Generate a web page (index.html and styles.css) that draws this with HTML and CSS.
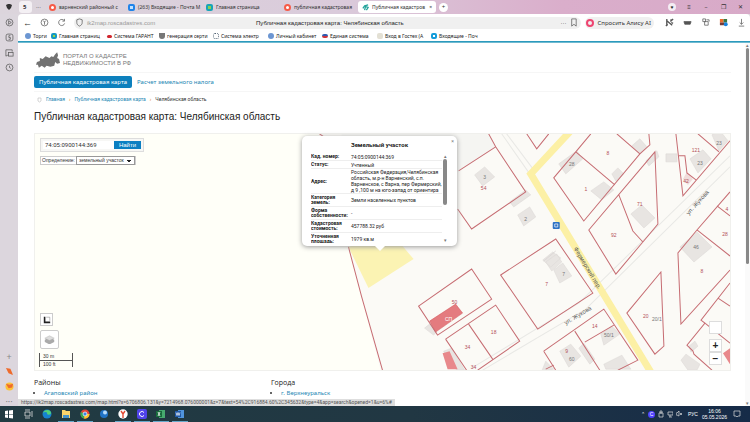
FILE: index.html
```html
<!DOCTYPE html>
<html lang="ru">
<head>
<meta charset="utf-8">
<title>Публичная кадастровая карта: Челябинская область</title>
<link rel="stylesheet" href="styles.css">
</head>
<body>
<header class="tabs">
  <svg class="cat" viewBox="0 0 8 8"><path d="M1 2l2-1h2l2 1-1 3-2 2-2-2z" fill="#333"/></svg>
  <button class="tab group">5</button><span class="dash">···</span>
  <button class="tab t1"><i class="dot red"></i><span>варненский районный с</span></button>
  <button class="tab t2"><i class="dot mail"></i><span>(263) Входящие - Почта М</span></button>
  <button class="tab t3"><i class="dot teal"></i><span>Главная страница</span></button>
  <button class="tab t4"><i class="dot red"></i><span>публичная кадастровая</span></button>
  <button class="tab t5 active"><svg class="favicon" viewBox="0 0 8 8"><path d="M1 5l2-3 4-1M3 7l1-4 3 1-2 3" fill="none" stroke="#23a39b" stroke-width="1.5"/></svg><span>Публичная кадастров</span><b>×</b></button>
  <button class="plus" aria-label="Новая вкладка">+</button>
  <div class="window-controls"><button class="shield" aria-label="Защита">♥</button><button aria-label="Меню">≡</button><button aria-label="Свернуть">–</button><button aria-label="Развернуть">❐</button><button aria-label="Закрыть">✕</button></div>
</header>
<div class="workspace">
  <aside class="rail">
    <button aria-label="Алиса"><svg viewBox="0 0 10 10"><circle cx="5" cy="5" r="3.8"/><path d="M4 3l3 2-3 2z"/></svg></button>
    <button aria-label="Вкладки"><svg viewBox="0 0 10 10"><rect x="1.2" y="1.2" width="7.6" height="7.6" rx="2"/><path d="M6 3H4.3v2H6v2H4"/></svg></button>
    <button aria-label="Снимки"><svg viewBox="0 0 10 10"><path d="M4 8H3L1 9V2h7v2"/><rect x="4" y="5" width="5" height="4"/></svg></button>
    <button aria-label="История"><svg viewBox="0 0 10 10"><circle cx="5" cy="5" r="3.8"/><path d="M5 3v2l1.5 1"/></svg></button>
    <span class="grow"></span>
    <button class="add" aria-label="Добавить">+</button>
    <button aria-label="Сервис"><svg viewBox="0 0 10 10"><path class="orange" d="M1 1l5 1 3 7-5-2z"/></svg></button>
    <button aria-label="Маркет"><svg viewBox="0 0 10 10"><circle cx="5" cy="5" r="4.5" fill="#fdc238" stroke="none"/><path class="orange" d="M1 2l4 1 4-1-1 4-4 1z"/></svg></button>
    <button class="add" aria-label="Ещё">···</button>
  </aside>
  <section class="browser">
    <div class="toolbar">
      <button class="back" aria-label="Назад">←</button>
      <button aria-label="Яндекс"><svg viewBox="0 0 10 10"><circle cx="5" cy="5" r="3.8"/><path d="M4 3l1 2 1-2M5 5v2.5"/></svg></button>
      <button aria-label="Обновить"><svg viewBox="0 0 10 10"><path d="M8 3a3.4 3.4 0 1 0 .5 3M8.3 1v2.5H6"/></svg></button>
      <div class="address"><svg viewBox="0 0 10 10"><path d="M5 1l3 1v3c0 2-1 3-3 4-2-1-3-2-3-4V2z"/></svg><span class="url">ik2map.roscadastres.com</span><strong>Публичная кадастровая карта: Челябинская область</strong><span class="more">···</span><svg class="bookmark" viewBox="0 0 10 10"><path d="M3 1h5v8L5.500 7 3 9z"/></svg></div>
      <button class="alice"><i></i>Спросить Алису AI</button>
      <div class="extensions">
        <svg viewBox="0 0 10 10"><path class="bold" d="M2 1v8M2 3l6 5M9 1L6 4M3 7L1 9M7 5l2 1M6 2l2 0"/></svg>
        <svg viewBox="0 0 10 10"><path d="M1 4h8l-1 3H2z" fill="#555"/></svg>
        <svg viewBox="0 0 10 10"><path d="M2 1h3v3H2zM4 4v4h4V4zM6 2h3v2"/></svg>
        <svg viewBox="0 0 10 10"><path d="M1 1h4v4H1z" class="orange"/><path d="M5 1h4v4H5z" fill="#3b7743" stroke="none"/><path d="M1 5h5v3H1z" fill="#773b36" stroke="none"/><circle cx="7.500" cy="7" r="2.200" fill="#1683df" stroke="none"/></svg>
        <svg viewBox="0 0 10 10"><path d="M5 1v6M3 5l2 2 2-2M2 9h6"/></svg>
      </div>
    </div>
    <nav class="bookmarks" aria-label="Закладки">
      <a href="#"><i class="b1"></i>Торги</a><a href="#"><i class="b2"></i>Главная страниц</a><a href="#"><i class="b3"></i>Система ГАРАНТ</a><a href="#"><i class="b4"></i>генерация серти</a><a href="#"><i class="b5"></i>Система электр</a><a href="#"><i class="b6"></i>Личный кабинет</a><a href="#"><i class="b7"></i>Единая система</a><a href="#"><i class="b8"></i>Вход в Гостех (А</a><a href="#"><i class="b9"></i>Входящие - Поч</a>
    </nav>
    <div class="viewport">
      <main>
        <div class="brand">
          <svg viewBox="0 0 25 18"><path d="M1 11l3-1 0-3 3 1 3-3 4 2 2-2 2 1 2-3 2-2 1 3-1 3 2 1 1 4-3 1-2-2-1 4-4 1-4-1-2 2-3-2-3 2-1-3-2 0z" fill="#727272"/></svg>
          <span>ПОРТАЛ О КАДАСТРЕ<br>НЕДВИЖИМОСТИ В РФ</span>
        </div>
        <nav class="menu"><a class="selected" href="#">Публичная кадастровая карта</a><a href="#">Расчет земельного налога</a></nav>
        <nav class="crumbs" aria-label="Навигация"><svg viewBox="0 0 5 6"><path d="M1 1h3v3L2.500 5 1 4z" fill="none" stroke="#bbb" stroke-width=".6"/></svg><a href="#">Главная</a><b>›</b><a href="#">Публичная кадастровая карта</a><b>›</b><span>Челябинская область</span></nav>
        <h1>Публичная кадастровая карта: Челябинская область</h1>
        <div class="map">
          <svg class="plan" viewBox="34 133 694 236" preserveAspectRatio="xMidYMid slice" role="img" aria-label="Карта участков">
            <path d="M34 133H728V369H34z" fill="#fffff8"/>
            <path d="M318 133H728V369H379L347 246z" fill="#fbfaf6"/>
            <path d="M340 133H487L494 146 457 170 347 246z" fill="#f5f5f2"/>
            <path d="M347 246L353 244 401 245 412 258 367 287z" fill="#fbf3b3"/>
            <g class="lanes"><path d="M500 133L528 173M505 133L532 169M481 369L584 308 728 166M470 367L577 302 728 155"/></g>
            <path class="road" d="M568 131L529 173 649 371"/>
            <g class="building">
              <path d="M473 174l10-8 10 10-12 9zM516 214l12-8 6 10-12 9zM508 201l16-12 5 5-17 12zM557 163l18-13 6 8-17 15zM589 190l13-9 10 8-12 10zM610 173l6-6 6 6-8 7zM630 145l8-7 7 8-7 7zM644 160l11-10 2 6-10 9zM664 153h11v8h-11zM688 158l13-9 8 9-13 14zM710 134l8-4 8 10-9 10zM629 213l11-9 13 13-11 10zM678 246l17-15 15 15-18 15zM544 261l11-8 5 8-10 9zM552 269l9-7 9 13-12 7zM558 350l11-7 10 12-12 11zM599 333l11-8 8 8-16 11zM577 347l5-5 11 16-5 5zM602 363l18-9 9 14h-25zM541 259l10-8 8 6-10 9zM542 260l12-10zM540 370l4-10 8 8zM687 345l6-5 3 5-7 6zM679 359l5-6 14 10-3 6h-9zM423 327l5-4 7 8-3 3zM442 350l8-3 13 22h-8z"/>
            </g>
            <path d="M428 320L454 303 461 312 434 331z" fill="#e47b7f" stroke="#d2545a" stroke-width=".5"/><path d="M441 352l7-2 8 18h-10zM721 352l7-5v16z" fill="#e8888b"/><path d="M681 178l4-7 6 7-5 6z" fill="#f0dcda"/>
            <g class="parcel">
              <path d="M347 246L360 295 381 369M318 133l12 8M487 133L494 146 524 191 470 228 456 208M494 146L457 170M525 133L535 148 547 133M589 133L574 151 552 177 582 220 638 153 648 144 647 133M615 133L638 153M574 151L613 184M653 151L587 229 614 273 641 241 656 223zM617 194L631 230 641 241M674 133L681 195 728 140M677 155H683L685 172 694 179M696 133L717 151M728 191L695 229 676 252 679 323 728 269M715 205L728 215M695 229L728 255"/>
              <path d="M417 305L470 268 490 298 436 334zM444 338L494 304 518 340 476 369M467 323L491 358M444 338L465 369M499 274L554 238 591 292 536 328zM542 350L602 308 636 359 616 369M573 330L598 369M583 341L612 324M542 350L554 369M544 368L552 364M659 271L625 312 653 353 662 345zM728 282L699 319 703 322 685 344 691 350 692 353 710 369M716 297L728 305M703 322L728 342"/>
            </g>
            <g class="labels">
              <text x="483" y="178">3</text><text x="482" y="189" class="redtext">54</text><text x="524" y="220">2</text><text x="570" y="165">28</text><text x="584" y="190" class="redtext">1</text><text x="606" y="154" class="redtext">8</text><text x="612" y="236" class="redtext">92</text><text x="638" y="205" class="redtext">71</text><text x="694" y="151" class="redtext">121</text><text x="698" y="164">23</text><text x="717" y="144">23</text><text x="684" y="182" class="redtext">42</text><text x="694" y="248">46</text><text x="723" y="235" class="redtext">28</text><text x="725" y="210" class="redtext">4</text><text x="700" y="272" class="redtext">8</text><text x="545" y="285" class="redtext">7</text><text x="562" y="275">7</text><text x="453" y="303" class="redtext">50</text><text x="447" y="320" class="white">СП</text><text x="492" y="333" class="redtext">18</text><text x="466" y="348" class="redtext">34</text><text x="472" y="368" class="redtext">34</text><text x="593" y="327" class="redtext">14</text><text x="607" y="336">50/1</text><text x="565" y="352" class="redtext">9</text><text x="570" y="360">60</text><text x="644" y="317" class="redtext">20</text><text x="655" y="320">20/1</text>
              <text class="street" transform="translate(697 203) rotate(-48)">ул. Жукова</text><text class="street" transform="translate(577 316) rotate(-31)">ул. Жукова</text><text class="street" transform="translate(584 268) rotate(59)">Фермерский пер.</text>
            </g>
            <rect x="551" y="221" width="7" height="7" rx="1" fill="#2d72c4"/><path d="M553 223h3v3h-3z" fill="none" stroke="#fff" stroke-width=".7"/>
          </svg>
          <div class="map-tools">
            <form class="search"><input aria-label="Кадастровый номер" value="74:05:0900144:369"><button type="button">Найти</button></form>
            <label class="kind">Определение:<select><option>земельный участок</option></select></label>
          </div>
          <div class="map-left"><button class="measure" aria-label="Измерить"><svg viewBox="0 0 10 10"><path d="M1 1h2v6h6v2H1z" fill="#222"/><path d="M4 1.500h4.500V6" fill="none" stroke="#777" stroke-width=".6"/></svg></button><button class="layers" aria-label="Слои"><svg viewBox="0 0 14 12"><path d="M1 6l6-3 6 3v3l-6 3-6-3z" fill="#aaa"/><path d="M1 4l6-3 6 3-6 3z" fill="#ddd" stroke="#aaa" stroke-width=".5"/></svg></button><div class="scale"><span>30 m</span><span>100 ft</span></div></div>
          <div class="map-right"><button aria-label="Слой"></button><div><button aria-label="Приблизить">+</button><button aria-label="Отдалить">−</button></div></div>
          <section class="popup">
            <button class="close" aria-label="Закрыть окно">×</button>
            <h2>Земельный участок</h2>
            <div class="details">
              <table>
                <tr><th>Кад. номер:</th><td>74:05:0900144:369</td></tr>
                <tr><th>Статус:</th><td>Учтенный</td></tr>
                <tr><th>Адрес:</th><td>Российская Федерация,Челябинская область, м.р-н Варненский, с.п. Варненское, с Варна, пер Фермерский, д 9 ,100 м на юго-запад от ориентира</td></tr>
                <tr><th>Категория земель:</th><td>Земли населенных пунктов</td></tr>
                <tr><th>Форма собственности:</th><td>-</td></tr>
                <tr><th>Кадастровая стоимость:</th><td>457788.32 руб</td></tr>
                <tr><th>Уточненная площадь:</th><td>1979 кв.м</td></tr>
              </table>
              <div class="mini-scroll"><span>▴</span><i></i><span>▾</span></div>
            </div>
          </section>
        </div>
        <div class="lists"><section><h2>Районы</h2><ul><li><a href="#">Агаповский район</a></li></ul></section><section><h2>Города</h2><ul><li><a href="#">г. Верхнеуральск</a></li></ul></section></div>
      </main>
      <div class="scrollbar"><span>▴</span><i></i><span class="down">▾</span></div>
      <div class="status">https://ik2map.roscadastres.com/map.html?x=6706806.131&amp;y=7214968.076000001&amp;z=7&amp;text=54%2C916884.60%2C345632&amp;type=4&amp;app=search&amp;opened=1&amp;u=6%#</div>
    </div>
  </section>
</div>
<footer class="taskbar">
  <div class="apps">
    <button aria-label="Пуск"><svg viewBox="0 0 10 10"><path d="M1 2l3-.5V5H1zM5 1.500L9 1v4H5zM1 5.500h3V9l-3-.5zM5 5.500h4v4L5 9z" fill="#fff"/></svg></button>
    <button aria-label="Представление задач"><svg viewBox="0 0 10 10"><path d="M2 3h5v4H2zM9 2v6M2 1h5M2 9h5" fill="none" stroke="#ddd" stroke-width=".8"/></svg></button>
    <button aria-label="Edge"><svg viewBox="0 0 10 10"><circle cx="5" cy="5" r="4.500" fill="#1683cf"/><path d="M1 4c1-4 8-4 8 0 0 2-3 2-4 1 1-2-2-3-4-1z" fill="#52d277"/></svg></button>
    <button class="open" aria-label="Проводник"><svg viewBox="0 0 10 10"><path d="M1 1h3l1 1h4v7H1z" fill="#f9d36a"/><path d="M2 6h6v3H2z" fill="#4693ca"/></svg></button>
    <button class="open" aria-label="Chrome"><svg viewBox="0 0 10 10"><circle cx="5" cy="5" r="4.500" fill="#e3463a"/><path d="M5 5L1 3a4.500 4.500 0 0 0 3 6.500z" fill="#35a853"/><path d="M5 5h4.500A4.500 4.500 0 0 1 4 9.500z" fill="#fbc52b"/><circle cx="5" cy="5" r="2" fill="#3987e6" stroke="#fff" stroke-width=".7"/></svg></button>
    <button aria-label="Почта"><svg viewBox="0 0 10 10"><circle cx="5" cy="5" r="4" fill="#2073c6"/><circle cx="6" cy="3.500" r="2" fill="#b7dcfc"/></svg></button>
    <button class="open" aria-label="Яндекс Браузер"><svg viewBox="0 0 10 10"><circle cx="5" cy="5" r="4.700" fill="#fff"/><path d="M3 2l2 3 2-3M5 5v4" fill="none" stroke="#e34a34" stroke-width="1.400"/></svg></button>
    <button class="open" aria-label="C"><svg viewBox="0 0 10 10"><rect width="10" height="10" rx="2" fill="#4f43e9"/><path d="M7 3.500a2.500 2.500 0 1 0 0 3" fill="none" stroke="#fff"/></svg></button>
    <button class="open" aria-label="Excel"><svg viewBox="0 0 10 10"><path d="M3 1h6v8H3z" fill="#46aa6f"/><path d="M0 2h6v6H0z" fill="#176b3b"/><path d="M2 3l2 4M4 3L2 7" stroke="#fff" stroke-width=".8"/></svg></button>
    <button class="open" aria-label="Word"><svg viewBox="0 0 10 10"><path d="M3 1h6v8H3z" fill="#5094dc"/><path d="M0 2h6v6H0z" fill="#1e57a5"/><path d="M1 3.500l1 3 1-3 1 3 1-3" fill="none" stroke="#fff" stroke-width=".7"/></svg></button>
  </div>
  <div class="tray"><span>⌃</span><i>C</i><svg viewBox="0 0 6 8"><path d="M1 3h4v4H1zM2 1h2v2H2z"/></svg><svg viewBox="0 0 6 8"><path d="M1 2h5v3H1zM3 5v2M2 7h3"/></svg><svg viewBox="0 0 6 8"><path d="M0 3h1l2-2v5L1 5H0zM4 3l2 2M6 3L4 5"/></svg><span class="lang">РУС</span><time>16:06<br>05.05.2026</time><svg class="notice" viewBox="0 0 8 8"><path d="M1 1h6v5H5L4 7 3 6H1z"/></svg></div>
</footer>
</body>
</html>
```
FILE: styles.css
```css
* { box-sizing: border-box; }
body { margin: 0; height: 100vh; overflow: hidden; display: flex; flex-direction: column; font: 6px/8px "Noto Sans", sans-serif; color: #333; background: #dcd6dd; }
button { border: 0; padding: 0; background: none; color: inherit; font: inherit; }
a { color: #1e87b4; text-decoration: none; }
svg { display: block; flex: none; }
h1, h2, ul { margin: 0; }

.tabs { flex: 0 0 14px; display: flex; align-items: center; background: linear-gradient(90deg, #dcd5dc, #dacbdb 45%, #daaecb 75%, #d8aac8); overflow: hidden; }
.cat { width: 8px; margin: 0 6px 0 5px; }
.tab { display: flex; align-items: center; gap: 3px; flex: 0 1 78px; min-width: 0; height: 12px; padding: 0 4px; border-radius: 3px; text-align: left; font-size: 5px; }
.tab span { white-space: nowrap; flex: 1; }
.group { flex: 0 0 13px; background: #f4f0f4; font-weight: bold; font-size: 6px; }
.dash { width: 13px; padding-left: 4px; }
.t1 { flex-basis: 79px; }
.active { background: #fff; }
.tab b { font-weight: normal; }
.favicon { width: 7px; }
.dot { width: 7px; height: 7px; flex: none; border-radius: 2px; background: #f65b48; border: 2px solid #f65b48; }
.dot.red { border-radius: 50%; background: #fff; }
.dot.mail { border-color: #2084e9; background: #c1e3ff; }
.dot.teal { border-color: #18a4b8; background: #8ad151; }
.plus { width: 9px; height: 9px; margin-left: 3px; background: #fff; border-radius: 50%; line-height: 8px; }
.window-controls { margin-left: auto; display: flex; gap: 9px; padding-right: 6px; }
.window-controls button { width: 8px; height: 8px; }
.window-controls .shield { background: #f5edf4; border-radius: 50%; font-size: 5px; }

.workspace { flex: 1; min-height: 0; display: flex; }
.rail { flex: 0 0 18px; display: flex; flex-direction: column; align-items: center; gap: 6px; padding-top: 4px; }
.rail button, .rail svg { width: 9px; height: 9px; }
.rail svg, .toolbar svg { fill: none; stroke: #555; stroke-width: .8; }
svg .orange { fill: #ee6b2c; stroke: none; }
svg .bold { stroke-width: 1.5; }
.grow { flex: 1; }
.rail .add { color: #888; font-size: 9px; }
.browser { flex: 1; min-width: 0; display: flex; flex-direction: column; background: #fff; border-radius: 4px 4px 0 0; overflow: hidden; }
.toolbar { flex: 0 0 17px; display: flex; align-items: center; gap: 8px; padding: 0 4px 0 5px; }
.toolbar svg { width: 9px; height: 9px; }
.toolbar .back { font-size: 9px; width: 9px; }
.address { flex: 1; height: 12px; display: flex; align-items: center; gap: 3px; border-radius: 6px; background: #f0f0f0; padding: 0 3px 0 1px; font-family: "Liberation Sans", sans-serif; }
.address .url { color: #999; flex: 0 0 166px; }
.address strong { flex: 1; font-weight: normal; color: #222; }
.alice { height: 12px; margin-left: -4px; display: flex; align-items: center; gap: 3px; padding: 0 3px 0 1px; border-radius: 6px; background: #f0f0f0; font-size: 6px; white-space: nowrap; }
.alice i { width: 8px; height: 8px; border: 2px solid #ee4571; border-radius: 50%; }
.extensions { display: flex; gap: 9px; margin-left: 3px; }
.bookmarks { flex: 0 0 11px; display: grid; grid-template-columns: 26px 56px 52px 54px 55px 54px 55px 54px 56px; padding-left: 7px; border-bottom: 1px solid #2c9abd; white-space: nowrap; font-size: 5px; }
.bookmarks a { color: #222; line-height: 9px; display: flex; align-items: center; gap: 2px; }
.bookmarks i { flex: none; width: 6px; height: 6px; background: #6c96d2; border-radius: 2px; }
.bookmarks .b1, .bookmarks .b6 { border-radius: 50%; }
.bookmarks .b2 { border: 2px solid #1597c2; background: #99d440; }
.bookmarks .b3 { width: 5px; height: 3px; background: #d12830; }
.bookmarks .b4 { background: #777; border-radius: 0 0 3px 3px; }
.bookmarks .b5 { border: 1px dotted #567; background: #fff; }
.bookmarks .b7 { height: 4px; background: linear-gradient(#315bb0 50%, #ce343b 50%); }
.bookmarks .b8 { background: #e3e0d4; }
.bookmarks .b9 { border: 2px solid #149cda; background: #fff; }

.viewport { flex: 1; min-height: 0; position: relative; display: flex; border-top: 1px solid #70bad0; }
main { flex: 1; padding: 8px 14px 0 16px; overflow: hidden; }
.brand { display: flex; gap: 3px; align-items: center; height: 21px; padding: 0 2px 4px; color: #777; font: 6px/7px "Liberation Sans", sans-serif; }
.brand svg { width: 24px; height: 18px; }
.menu { height: 20px; border-top: 1px solid #f6f6f6; border-bottom: 1px solid #f6f6f6; display: flex; align-items: center; }
.menu a { padding: 2px 5px; line-height: 8px; }
.menu .selected { color: #fff; background: #0d80bd; border-radius: 2px; }
.crumbs { display: flex; align-items: center; gap: 4px; height: 15px; padding-left: 3px; font: 5px/7px Roboto, sans-serif; }
.crumbs svg { width: 5px; }
.crumbs b { color: #e5974b; }
h1 { font: 10px/14px "Liberation Sans", sans-serif; color: #222; margin: 3px 0 9px; }
.map { position: relative; height: calc(100vh - 184px); min-height: 238px; border: 1px solid #f0f0ed; }
.plan { width: 100%; height: 100%; }
.lanes { stroke: #e8e8e5; stroke-width: 1; fill: none; }
.road { stroke: #fcf0a5; stroke-width: 7; fill: none; }
.building { fill: #e8e5e2; stroke: #dad6d4; stroke-width: .5; }
.parcel { fill: none; stroke: #c66c72; stroke-width: 1; }
.labels { font: 5px "Liberation Sans", sans-serif; fill: #777; text-anchor: middle; }
.redtext { fill: #b35058; }
.white { fill: #fff; }
.labels .street { font-size: 6px; fill: #555; }
.map-tools { position: absolute; left: 5px; top: 4px; font: 5px/7px "Liberation Sans", sans-serif; }
.search { display: flex; width: 104px; height: 14px; padding: 2px; border: 1px solid #ddd; background: #f7f7f5; }
.search input { flex: 1; min-width: 0; border: 0; padding: 0 2px; background: #fff; color: #333; font: 6px/8px Roboto, sans-serif; }
.search button { width: 27px; background: #0b7fc2; color: #fff; font-size: 6px; }
.kind { display: flex; gap: 1px; align-items: center; width: 96px; height: 9px; margin-top: 4px; padding-left: 1px; border: 1px solid #ccc; background: #fff; }
.kind select { appearance: none; flex: 1; min-width: 0; height: 9px; padding: 0 2px; border: 1px solid #999; background: linear-gradient(45deg, transparent 50%, #222 50%) right 5px center / 2px 2px no-repeat, linear-gradient(-45deg, transparent 50%, #222 50%) right 3px center / 2px 2px no-repeat, #fff; color: #333; font: 5px/7px "Liberation Sans", sans-serif; }
.map-left { position: absolute; left: 4px; bottom: 3px; display: flex; flex-direction: column; gap: 4px; align-items: flex-start; }
.map-left button { display: grid; place-items: center; margin-left: 1px; border: 1px solid #ccc; background: #fff; }
.map-left .measure { width: 13px; height: 13px; }
.map-left .layers { width: 19px; height: 19px; border-radius: 2px; }
.measure svg { width: 8px; }
.layers svg { width: 11px; }
.scale { width: 34px; height: 14px; border: 1px solid #555; border-width: 0 1px; font: 5px/7px "Liberation Sans", sans-serif; }
.scale span { display: block; height: 7px; padding-left: 3px; }
.scale span + span { border-top: 1px solid #555; }
.map-right { position: absolute; right: 8px; bottom: 5px; display: flex; flex-direction: column; gap: 5px; }
.map-right button { display: block; width: 13px; height: 13px; background: #fff; border: 1px solid #ddd; font: bold 10px/9px "Liberation Sans", sans-serif; color: #222; }
.popup { position: absolute; left: 267px; top: 2px; width: 155px; height: 110px; padding: 5px 9px 3px; border-radius: 5px; background: #fff; box-shadow: 0 1px 5px #999; font: 5px/6px Roboto, sans-serif; color: #222; }
.popup::after { content: ""; position: absolute; top: 110px; left: 73px; border: 5px solid transparent; border-top-color: #fff; border-bottom: 0; }
.close { position: absolute; right: 3px; top: 2px; color: #777; }
.popup h2 { text-align: center; font: bold 6px/8px Roboto, sans-serif; }
.details { display: flex; height: 90px; margin-top: 4px; overflow: hidden; }
.details table { flex: 1; border-collapse: collapse; align-self: flex-start; table-layout: fixed; }
.details th { width: 40px; padding: 1px 0; text-align: left; line-height: 5px; }
.details td { padding: 0; }
.details tr { border-bottom: 1px solid #eee; }
.mini-scroll { width: 6px; display: flex; flex-direction: column; align-items: center; color: #777; }
.mini-scroll i { width: 4px; height: 46px; background: #888; border-radius: 2px; }
.mini-scroll span:last-child { margin-top: auto; }
.lists { display: grid; grid-template-columns: 34% 1fr; padding-top: 7px; }
.lists h2 { font: 7px/9px "Open Sans", sans-serif; color: #222; }
.lists ul { padding-left: 10px; margin-top: 2px; font: 6px/9px "Noto Sans", sans-serif; }
.scrollbar { width: 5px; display: flex; flex-direction: column; align-items: center; background: #fafafa; color: #777; overflow: hidden; font-size: 5px; line-height: 5px; }
.scrollbar i { width: 3px; height: 216px; background: #888; border-radius: 2px; }
.scrollbar .down { margin-top: auto; }
.status { position: absolute; left: 0; bottom: 0; height: 7px; padding: 0 3px; background: #dedede; color: #555; font: 5px/7px Roboto, sans-serif; white-space: nowrap; }

.taskbar { flex: 0 0 16px; display: flex; justify-content: space-between; align-items: center; background: linear-gradient(90deg, #213b42, #213743 55%, #162b48); color: #fff; }
.apps { display: flex; height: 16px; gap: 3px; padding-left: 1px; }
.apps button { width: 16px; height: 16px; display: grid; place-items: center; border-bottom: 1px solid transparent; }
.apps .open { border-color: #66a9cb; }
.apps svg { width: 10px; height: 10px; }
.tray { display: flex; align-items: center; gap: 3px; padding-right: 9px; font: 5px/6px "Liberation Sans", sans-serif; }
.tray i { width: 7px; height: 7px; border-radius: 50%; text-align: center; font-style: normal; background: #5043ff; }
.tray svg { width: 6px; height: 8px; fill: none; stroke: #ddd; stroke-width: .7; }
.tray .lang { margin-left: 3px; }
.tray time { text-align: center; margin: 0 3px 0 1px; }
.tray .notice { width: 8px; }
```
